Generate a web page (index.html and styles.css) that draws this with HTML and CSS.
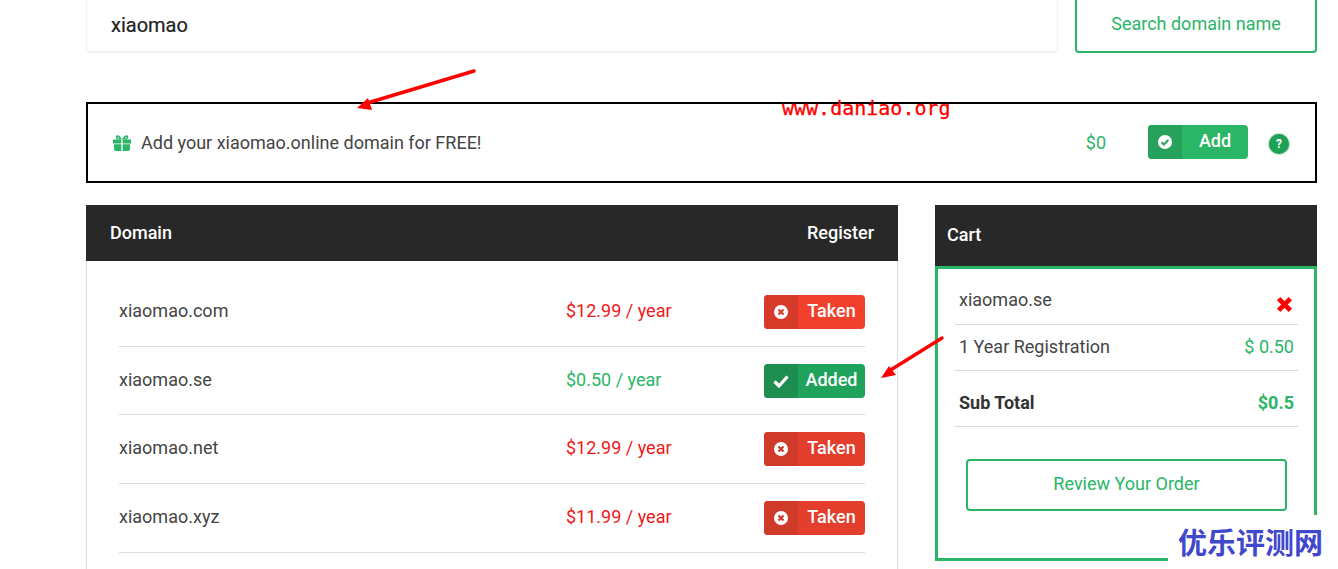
FILE: index.html
```html
<!DOCTYPE html>
<html lang="en">
<head>
<meta charset="utf-8">
<title>Domain search</title>
<link rel="stylesheet" href="styles.css">
</head>
<body>
<main class="page">
  <section class="search">
    <div class="search-input">xiaomao</div>
    <button class="search-btn">Search domain name</button>
  </section>

  <section class="promo">
    <svg class="gift" viewBox="0 0 18 16"><path d="M0 4.500h8.300v4H0zM9.700 4.500H18v4H9.700zM1 9.300h7.300V16H3a2 2 0 0 1-2-2zM9.700 9.300H17V14a2 2 0 0 1-2 2H9.700z" fill="#2ab567"/><path d="M9 4.500C7.500 1.200 5.500-.2 4 .2 2.300.7 2.300 3.700 4.500 4.500zM9 4.500c1.500-3.300 3.500-4.700 5-4.300 1.700.5 1.700 3.500-.5 4.300z" fill="#2ab567"/><circle cx="5.200" cy="2.700" r=".7" fill="#fff"/><circle cx="12.800" cy="2.700" r=".7" fill="#fff"/></svg>
    <span class="promo-text">Add your xiaomao.online domain for FREE!</span>
    <span class="promo-price">$0</span>
    <span class="btn btn-add">
      <span class="btn-icon"><svg class="ico" viewBox="0 0 14 14"><circle cx="7" cy="7" r="7" fill="#fff"/><path d="M3.600 7.200 6 9.500l4.400-4.600" fill="none" stroke="#26a25c" stroke-width="2"/></svg></span>
      <span class="btn-label">Add</span>
    </span>
    <span class="help">?</span>
  </section>

  <section class="columns">
    <div class="domains">
      <header class="panel-head"><span>Domain</span><span>Register</span></header>
      <ul class="rows">
        <li class="row"><span class="name">xiaomao.com</span><span class="price taken-price">$12.99 / year</span>
          <span class="btn btn-taken"><span class="btn-icon"><svg class="ico" viewBox="0 0 14 14"><circle cx="7" cy="7" r="7" fill="#fff"/><path d="M4.500 4.500l5 5m0-5l-5 5" stroke="#d63b29" stroke-width="2.200"/></svg></span><span class="btn-label">Taken</span></span></li>
        <li class="row"><span class="name">xiaomao.se</span><span class="price added-price">$0.50 / year</span>
          <span class="btn btn-added"><span class="btn-icon"><svg class="ico" viewBox="0 0 16 14"><path d="M1.500 7.500l4.500 4.500L14.500 2.500" fill="none" stroke="#fff" stroke-width="3.200"/></svg></span><span class="btn-label">Added</span></span></li>
        <li class="row"><span class="name">xiaomao.net</span><span class="price taken-price">$12.99 / year</span>
          <span class="btn btn-taken dim"><span class="btn-icon"><svg class="ico" viewBox="0 0 14 14"><circle cx="7" cy="7" r="7" fill="#fff"/><path d="M4.500 4.500l5 5m0-5l-5 5" stroke="#cf3a29" stroke-width="2.200"/></svg></span><span class="btn-label">Taken</span></span></li>
        <li class="row"><span class="name">xiaomao.xyz</span><span class="price taken-price">$11.99 / year</span>
          <span class="btn btn-taken dim"><span class="btn-icon"><svg class="ico" viewBox="0 0 14 14"><circle cx="7" cy="7" r="7" fill="#fff"/><path d="M4.500 4.500l5 5m0-5l-5 5" stroke="#cf3a29" stroke-width="2.200"/></svg></span><span class="btn-label">Taken</span></span></li>
      </ul>
    </div>

    <aside class="cart">
      <header class="panel-head cart-head"><span>Cart</span></header>
      <div class="cart-body">
        <div class="cart-line cart-item"><span>xiaomao.se</span>
          <svg class="remove" viewBox="0 0 16 16"><path d="M2.500 2.500l11 11m0-11l-11 11" stroke="#f00" stroke-width="4.500"/></svg></div>
        <div class="cart-line cart-reg"><span>1 Year Registration</span><span class="green">$ 0.50</span></div>
        <div class="cart-line cart-total"><span>Sub Total</span><span class="green">$0.5</span></div>
        <button class="review">Review Your Order</button>
      </div>
    </aside>
  </section>
</main>

<svg class="arrows" viewBox="0 0 1338 569" aria-hidden="true">
  <path d="M474 71 364 104" stroke="#f00" stroke-width="3.500" stroke-linecap="round"/>
  <path d="M357 108 368 98 372 110z" fill="#f00"/>
  <path d="M942 338 889 371" stroke="#f00" stroke-width="3.500" stroke-linecap="round"/>
  <path d="M881 378 889 366 896 375z" fill="#f00"/>
</svg>
<div class="mark-url">www.daniao.org</div>
<div class="mark-cn">优乐评测网</div>
</body>
</html>
```
FILE: styles.css
```css
* { box-sizing: border-box; }
html, body { margin: 0; height: 569px; overflow: hidden; background: #fff; }
body { font-family: Roboto, "Liberation Sans", sans-serif; color: #444; position: relative; }
ul { list-style: none; margin: 0; padding: 0; }

.page { width: 1231px; margin-left: 86px; }

.search { display: flex; gap: 17px; height: 53px; }
.search-input {
  width: 972px; border: 1px solid #f2f2f2; border-bottom-width: 2px; border-top: 0; border-radius: 0 0 4px 4px;
  padding: 13px 24px 0; font-size: 20px; line-height: 24px; font-weight: 400; color: #222;
  -webkit-text-stroke: .2px #222;
}
.search-btn {
  flex: 1; border: 2px solid #2ab567; border-top: 0; border-radius: 0 0 4px 4px; background: #fff;
  color: #2ab567; font: 400 18px Roboto, sans-serif; padding: 0 0 5px;
}

.promo {
  display: flex; align-items: center; height: 81px; margin-top: 49px;
  border: 2px solid #000; padding: 0 26px 0 25px; font-size: 18px;
}
.gift { width: 18px; height: 16px; margin-right: 10px; flex: none; }
.promo-text { flex: 1; color: #444; }
.promo-price { color: #2ab567; margin-right: 42px; }
.help {
  width: 20px; height: 20px; margin: 2px 0 0 21px; border-radius: 50%; background: #1ea155;
  color: #fff; font-size: 12px; font-weight: 700; line-height: 20px; text-align: center;
  box-shadow: 0 0 2px #1ea155;
}

.btn {
  display: flex; width: 101px; height: 34px; border-radius: 4px; overflow: hidden; color: #fff; flex: none;
  font-size: 18px; font-weight: 500;
}
.btn-icon { width: 34px; display: flex; align-items: center; justify-content: center; flex: none; }
.btn-label { flex: 1; text-align: center; line-height: 32px; }
.ico { width: 14px; height: 14px; }
.btn-add { width: 100px; margin-bottom: 2px; background: #2ab567; }
.btn-add .btn-icon { background: #26a25c; }
.btn-taken { background: #f1412c; }
.btn-taken .btn-icon { background: #d63b29; }
.btn-taken.dim { background: #e33d2b; }
.btn-taken.dim .btn-icon { background: #cf3a29; }
.btn-added { background: #1fa25c; }
.btn-added .btn-icon { background: #1e8e50; }
.btn-added .ico { width: 16px; }

.columns { display: flex; gap: 37px; margin-top: 22px; align-items: flex-start; }
.panel-head {
  display: flex; justify-content: space-between; align-items: center; height: 56px; padding: 0 24px 2px;
  background: #282828; color: #fff; font-size: 18px; font-weight: 500;
}
.domains { width: 812px; }
.rows {
  border: 1px solid #ddd; border-top: 0; height: 320px; padding: 17px 32px 0;
}
.row {
  display: flex; align-items: center; height: 68.7px; border-bottom: 1px solid #ddd; font-size: 18px;
}
.name { flex: 1; color: #444; margin-bottom: 2.7px; }
.price { width: 198px; margin-bottom: 2.7px; }
.taken-price { color: #f01818; }
.added-price { color: #2ab567; }

.cart { width: 382px; }
.cart-head { height: 61px; padding: 0 12px 2px; }
.cart-body {
  height: 295px; border: 3px solid #2ab567; padding: 0 16px 0 17px;
}
.cart-line {
  display: flex; justify-content: space-between; border-bottom: 1px solid #d8d8d8;
  padding: 0 4px; font-size: 18px;
}
.cart-item { height: 56px; padding-top: 20px; line-height: 21px; align-items: flex-start; }
.cart-reg { height: 46px; align-items: center; padding-bottom: 2px; }
.cart-total { height: 56px; align-items: center; font-weight: 700; color: #333; padding-top: 8px; }
.remove { width: 17px; height: 17px; margin: 7px 1px 0 0; }
.green { color: #2ab567; }
.review {
  display: block; width: 321px; height: 52px; margin: 32px 0 0 11px; border: 2px solid #2ab567; border-radius: 4px;
  background: #fff; color: #2ab567; font: 400 18px Roboto, sans-serif; padding: 0 0 4px;
}

.arrows { position: absolute; left: 0; top: 0; width: 1338px; height: 569px; pointer-events: none; }
.mark-url {
  position: absolute; left: 782px; top: 96px; color: #f00; white-space: nowrap;
  font: 20px/24px "DejaVu Sans Mono", monospace; -webkit-text-stroke: .3px #f00;
}
.mark-cn {
  position: absolute; left: 1168px; top: 515px; width: 170px; height: 54px; background: #fff; padding: 8px 0 0 10px;
  color: #3f48cc; white-space: nowrap; font: 700 29px/36px "Noto Sans CJK SC", sans-serif;
}
```
